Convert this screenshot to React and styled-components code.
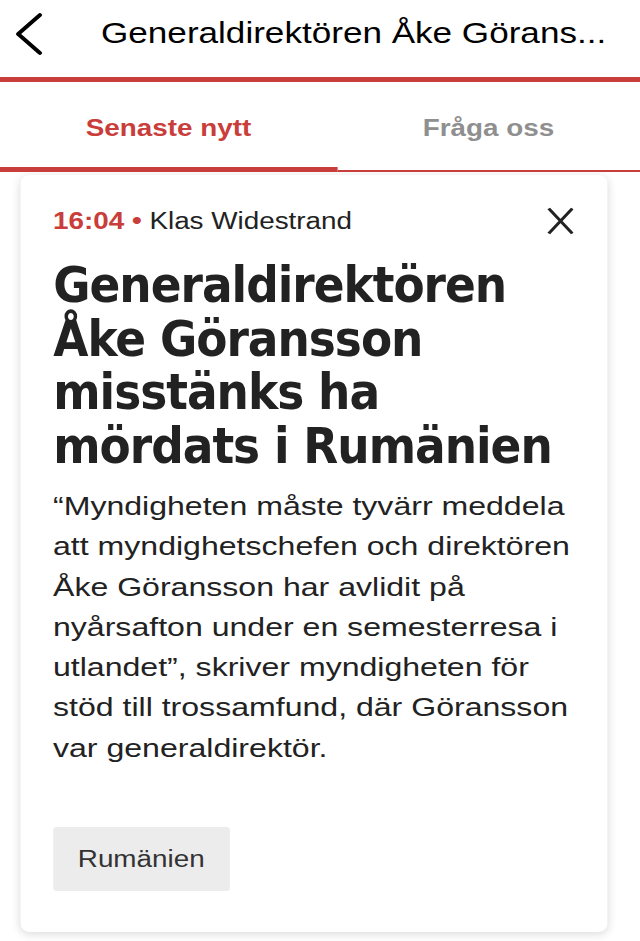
import React from "react";
import styled, { createGlobalStyle } from "styled-components";

// the reference is a phone capture squeezed more vertically than horizontally,
// so the page is laid out narrow and stretched sideways by this factor
const STRETCH = 1.21;

const GlobalStyle = createGlobalStyle`
  html, body {
    margin: 0;
    padding: 0;
    background: #fff;
    overflow: hidden;
  }
  body {
    font-family: "Liberation Sans", Arial, sans-serif;
    -webkit-font-smoothing: antialiased;
  }
`;

const Page = styled.div`
  width: ${640 / STRETCH}px;
  height: 941px;
  overflow: hidden;
  background: #fff;
  transform: scaleX(${STRETCH});
  transform-origin: 0 0;
`;

const Header = styled.header`
  height: 77px;
  border-bottom: 5px solid #c93d3a;
`;

const HeaderInner = styled.div`
  display: flex;
  align-items: center;
  height: 67px;
`;

const BackButton = styled.button`
  width: 83.5px;
  height: 67px;
  padding: 0 0 0 12px;
  border: none;
  background: transparent;
  display: flex;
  align-items: center;
`;

const Title = styled.h1`
  margin: 0;
  width: 425px;
  font-size: 29px;
  font-weight: 400;
  color: #000;
  white-space: nowrap;
  overflow: hidden;
`;

const Tabs = styled.nav`
  display: grid;
  grid-template-columns: 278.5px 1fr;
`;

const Tab = styled.div`
  height: 90px;
  box-sizing: border-box;
  padding-top: 32px;
  line-height: 28px;
  text-align: center;
  font-size: 23px;
  font-weight: 700;
  color: ${(p) => (p.active ? "#c93d3a" : "#8f8f8f")};
  border-bottom: ${(p) => (p.active ? 5 : 2)}px solid #c93d3a;
`;

const Feed = styled.main`
  padding: 3px 26.5px 0 16.5px;
`;

const Card = styled.article`
  background: #fff;
  border-radius: 8px;
  box-shadow: 0 2px 9px rgba(0, 0, 0, 0.15);
  padding: 28px 14px 41px 27.3px;
`;

const Meta = styled.div`
  display: flex;
  align-items: center;
  justify-content: space-between;
  height: 36px;
`;

const Byline = styled.div`
  font-size: 23px;
  color: #222;
`;

const Time = styled.span`
  color: #c93d3a;
  font-weight: 700;
`;

const CloseButton = styled.button`
  border: none;
  background: transparent;
  padding: 0;
  margin-right: 14px;
  display: flex;
`;

// the headline face is narrow in the capture, so it undoes the page stretch
const Headline = styled.h2`
  margin: 19px 0 0;
  width: ${STRETCH * 100}%;
  transform: scaleX(${1 / STRETCH});
  transform-origin: 0 0;
  font-family: "DejaVu Sans Condensed", "DejaVu Sans", sans-serif;
  font-weight: 700;
  font-size: 50.5px;
  line-height: 53.5px;
  letter-spacing: -1px;
  color: #222;
`;

const Lead = styled.p`
  margin: 14px 0 0;
  font-size: 26.5px;
  line-height: 40.3px;
  color: #222;
`;

const TagRow = styled.div`
  display: flex;
  margin-top: 59px;
`;

const Tag = styled.span`
  display: inline-flex;
  align-items: center;
  height: 64px;
  padding: 0 20.5px;
  background: #ececec;
  border-radius: 3px;
  font-size: 23px;
  color: #333;
`;

const Chevron = () => (
  <svg width="24" height="44" viewBox="0 0 24 44">
    <path d="M21 3 L3 22 L21 41" fill="none" stroke="#000" strokeWidth="3.6" strokeLinecap="round" strokeLinejoin="round" />
  </svg>
);

const Cross = () => (
  <svg width="22.5" height="28" viewBox="0 0 22.5 28">
    <path d="M1.5 1.5 L21 26.5 M21 1.5 L1.5 26.5" fill="none" stroke="#222" strokeWidth="2.8" />
  </svg>
);

export default function App() {
  return (
    <Page>
      <GlobalStyle />
      <Header>
        <HeaderInner>
          <BackButton aria-label="Tillbaka">
            <Chevron />
          </BackButton>
          <Title>Generaldirektören Åke Görans...</Title>
        </HeaderInner>
      </Header>
      <Tabs>
        <Tab active>Senaste nytt</Tab>
        <Tab>Fråga oss</Tab>
      </Tabs>
      <Feed>
        <Card>
          <Meta>
            <Byline>
              <Time>16:04 •</Time> Klas Widestrand
            </Byline>
            <CloseButton aria-label="Stäng">
              <Cross />
            </CloseButton>
          </Meta>
          <Headline>
            Generaldirektören Åke Göransson misstänks ha mördats i Rumänien
          </Headline>
          <Lead>
            “Myndigheten måste tyvärr meddela att myndighetschefen och direktören Åke
            Göransson har avlidit på nyårsafton under en semesterresa i utlandet”,
            skriver myndigheten för stöd till trossamfund, där Göransson var
            generaldirektör.
          </Lead>
          <TagRow>
            <Tag>Rumänien</Tag>
          </TagRow>
        </Card>
      </Feed>
    </Page>
  );
}
